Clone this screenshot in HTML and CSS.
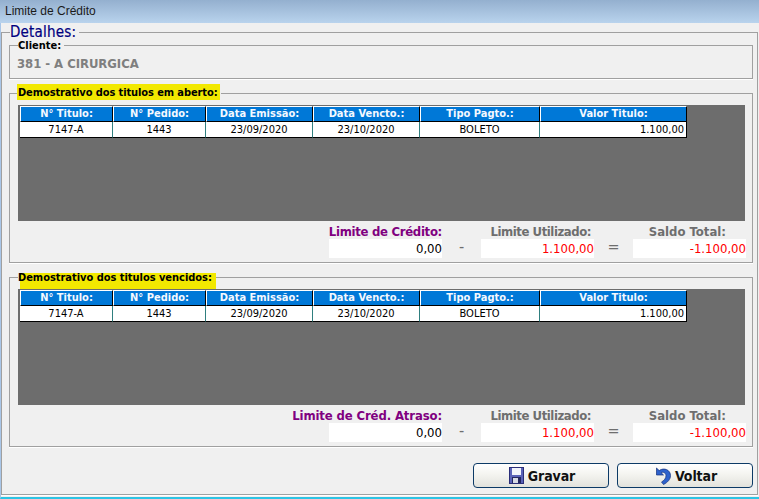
FILE: index.html
```html
<!DOCTYPE html>
<html lang="pt-BR">
<head>
    <meta charset="UTF-8">
    <title>Limite de Crédito</title>
    <link rel="stylesheet" href="styles.css">
</head>
<body>
    <div class="title-bar">Limite de Crédito</div>

    <div class="window">
        <fieldset class="details">
            <legend>Detalhes:</legend>

            <fieldset class="group client">
                <legend>Cliente:</legend>
                <div class="client-name">381 - A CIRURGICA</div>
            </fieldset>

            <fieldset class="group open">
                <legend class="marked">Demostrativo dos titulos em aberto:</legend>
                <div class="grid-area">
                    <table>
                        <thead>
                            <tr>
                                <th class="c1">N° Titulo:</th>
                                <th class="c2">N° Pedido:</th>
                                <th class="c3">Data Emissão:</th>
                                <th class="c3">Data Vencto.:</th>
                                <th class="c4">Tipo Pagto.:</th>
                                <th class="c5">Valor Titulo:</th>
                            </tr>
                        </thead>
                        <tbody>
                            <tr>
                                <td>7147-A</td>
                                <td>1443</td>
                                <td>23/09/2020</td>
                                <td>23/10/2020</td>
                                <td>BOLETO</td>
                                <td class="num">1.100,00</td>
                            </tr>
                        </tbody>
                    </table>
                </div>
                <div class="totals">
                    <div class="total">
                        <span class="label credit">Limite de Crédito:</span>
                        <span class="value">0,00</span>
                    </div>
                    <span class="sign">-</span>
                    <div class="total">
                        <span class="label used">Limite Utilizado:</span>
                        <span class="value red">1.100,00</span>
                    </div>
                    <span class="sign">=</span>
                    <div class="total">
                        <span class="label balance">Saldo Total:</span>
                        <span class="value red">-1.100,00</span>
                    </div>
                </div>
            </fieldset>

            <fieldset class="group overdue">
                <legend class="marked">Demostrativo dos titulos vencidos:</legend>
                <div class="grid-area">
                    <table>
                        <thead>
                            <tr>
                                <th class="c1">N° Titulo:</th>
                                <th class="c2">N° Pedido:</th>
                                <th class="c3">Data Emissão:</th>
                                <th class="c3">Data Vencto.:</th>
                                <th class="c4">Tipo Pagto.:</th>
                                <th class="c5">Valor Titulo:</th>
                            </tr>
                        </thead>
                        <tbody>
                            <tr>
                                <td>7147-A</td>
                                <td>1443</td>
                                <td>23/09/2020</td>
                                <td>23/10/2020</td>
                                <td>BOLETO</td>
                                <td class="num">1.100,00</td>
                            </tr>
                        </tbody>
                    </table>
                </div>
                <div class="totals">
                    <div class="total">
                        <span class="label credit">Limite de Créd. Atraso:</span>
                        <span class="value">0,00</span>
                    </div>
                    <span class="sign">-</span>
                    <div class="total">
                        <span class="label used">Limite Utilizado:</span>
                        <span class="value red">1.100,00</span>
                    </div>
                    <span class="sign">=</span>
                    <div class="total">
                        <span class="label balance">Saldo Total:</span>
                        <span class="value red">-1.100,00</span>
                    </div>
                </div>
            </fieldset>

            <div class="actions">
                <button class="save">
                    <svg width="15" height="17" viewBox="0 0 15 17">
                        <rect x="0.5" y="0.5" width="14" height="16" fill="#5a62b8" stroke="#2a2e78"/>
                        <rect x="3" y="1" width="9" height="7" fill="#f2f4fb"/>
                        <rect x="3" y="10" width="9" height="6" fill="#23265e"/>
                        <rect x="4" y="11" width="5" height="5" fill="#d6d9e4"/>
                    </svg>
                    Gravar
                </button>
                <button class="back">
                    <svg width="15" height="18" viewBox="0 0 15 18">
                        <path d="M0.5 1 L0.5 8 L7.5 8 L5 5.6 C7.5 4.6 10 6 10 8.8 C10 11.5 8 13.5 5.5 15 L7.5 17.5 C11.5 15.5 14.5 12.5 14.5 8.5 C14.5 3 8 0 3.2 3.6 Z" fill="#2e62cc" stroke="#14307c" stroke-width="0.7"/>
                    </svg>
                    Voltar
                </button>
            </div>
        </fieldset>
    </div>
</body>
</html>
```

FILE: styles.css
```css
html, body {
    margin: 0;
    padding: 0;
}

body {
    width: 759px;
    height: 499px;
    overflow: hidden;
    font-family: "DejaVu Sans", "Liberation Sans", sans-serif;
    font-stretch: condensed;
    background-color: #f0f0f0;
}

.title-bar {
    height: 23px;
    line-height: 23px;
    padding-left: 5px;
    font-family: "Liberation Sans", sans-serif;
    font-size: 12px;
    color: #1a1a1a;
    background: linear-gradient(#94b0cf, #b9d3ed);
}

.window {
    height: 476px;
    padding: 2px 0 0 0;
    box-sizing: border-box;
    border-left: 1px solid #a9c6e8;
    border-bottom: 2px solid #2cc4e4;
}

fieldset {
    margin: 0;
    min-width: 0;
    border: 1px solid #a0a0a0;
    box-shadow: 0 1px 0 #fff;
}

.details {
    width: 757px;
    height: 470px;
    box-sizing: border-box;
    padding: 0 5px 6px 7px;
}

.details > legend {
    margin-left: 1px;
    padding: 0 3px 0 0;
    line-height: 14px;
    font-size: 15px;
    letter-spacing: 0.2px;
    color: #000080;
    -webkit-text-stroke: 0.2px #000080;
}

.group {
    padding: 0 7px 3px 8px;
    width: 744px;
    box-sizing: border-box;
}

.group legend {
    margin-left: 0;
    padding: 0 3px 0 0;
    line-height: 12px;
    font-size: 11px;
    font-weight: bold;
    color: #000;
}

.client {
    height: 40px;
}

.client legend {
    position: relative;
    top: 1px;
}

.client-name {
    margin: 5px 0 0 -1px;
    font-size: 13px;
    font-weight: bold;
    letter-spacing: -0.05px;
    color: #7f7f7f;
}

.open {
    margin-top: 8px;
    height: 176px;
}

.overdue {
    margin-top: 9px;
    height: 175px;
}

.marked {
    position: relative;
    isolation: isolate;
}

.open .marked {
    letter-spacing: -0.1px;
}

.overdue .marked {
    letter-spacing: -0.03px;
}

.marked::before {
    content: "";
    position: absolute;
    z-index: -1;
    left: -1px;
    right: 1px;
    top: -3px;
    height: 16px;
    background-color: #f2e800;
}

.group.overdue legend {
    line-height: 10px;
    top: 1px;
}

.overdue .marked::before {
    left: 2px;
    right: -1px;
    top: 0;
}

.open .grid-area {
    margin-top: 6px;
}

.overdue .grid-area {
    margin-top: 7px;
}

.grid-area {
    height: 116px;
    padding: 1px 0 0 2px;
    box-sizing: border-box;
    background-color: #6d6d6d;
}

table {
    border-collapse: separate;
    border-spacing: 0;
    table-layout: fixed;
    width: 667px;
    font-size: 11px;
}

.c1, .c2 { width: 93px; }
.c3 { width: 107px; }
.c4 { width: 120px; }
.c5 { width: 147px; }

th, td {
    padding: 0;
    box-sizing: border-box;
    text-align: center;
    overflow: hidden;
    white-space: nowrap;
}

th {
    height: 16px;
    line-height: 14px;
    color: #f4f8ff;
    font-weight: bold;
    background-color: #0078d7;
    border-top: 1px solid #fff;
    border-left: 1px solid #fff;
    border-right: 1px solid #000;
    border-bottom: 1px solid #000;
}

td {
    height: 16px;
    padding-top: 1px;
    line-height: 14px;
    color: #000;
    background-color: #fff;
    border-right: 1px solid #2f7f7f;
    border-bottom: 1px solid #000;
}

td:last-child {
    border-right-color: #000;
}

td.num {
    text-align: right;
    padding-right: 2px;
}

.totals {
    display: flex;
    justify-content: flex-end;
    margin-top: 2px;
    margin-right: -1px;
}

.total {
    width: 113px;
    display: flex;
    flex-direction: column;
    align-items: flex-end;
}

.label {
    height: 16px;
    line-height: 18px;
    font-size: 13px;
    font-weight: bold;
    white-space: nowrap;
}

.credit { color: #800080; letter-spacing: -0.3px; }
.overdue .credit { letter-spacing: -0.13px; }
.used { color: #6e6e6e; margin-right: 3px; letter-spacing: -0.45px; }
.balance { color: #6e6e6e; margin-right: 20px; }

.value {
    width: 100%;
    height: 19px;
    line-height: 19px;
    font-size: 13px;
    text-align: right;
    background-color: #fff;
    color: #000;
}

.value.red {
    color: #ff0000;
}

.sign {
    width: 39px;
    padding-top: 14px;
    line-height: 19px;
    text-align: center;
    font-size: 16px;
    color: #6e6e6e;
}

.actions {
    display: flex;
    justify-content: flex-end;
    gap: 8px;
    margin-top: 16px;
    margin-right: -1px;
}

button {
    width: 136px;
    height: 25px;
    display: flex;
    align-items: center;
    justify-content: center;
    gap: 4px;
    padding: 0;
    font-family: inherit;
    font-stretch: inherit;
    font-size: 14px;
    font-weight: bold;
    letter-spacing: -0.1px;
    color: #111;
    border: 1px solid #0c3a66;
    border-radius: 4px;
    background: linear-gradient(#ffffff, #f4f4f0 45%, #e2e2dc);
}

.save {
    padding-left: 2px;
}

.back {
    padding-left: 3px;
}
```
